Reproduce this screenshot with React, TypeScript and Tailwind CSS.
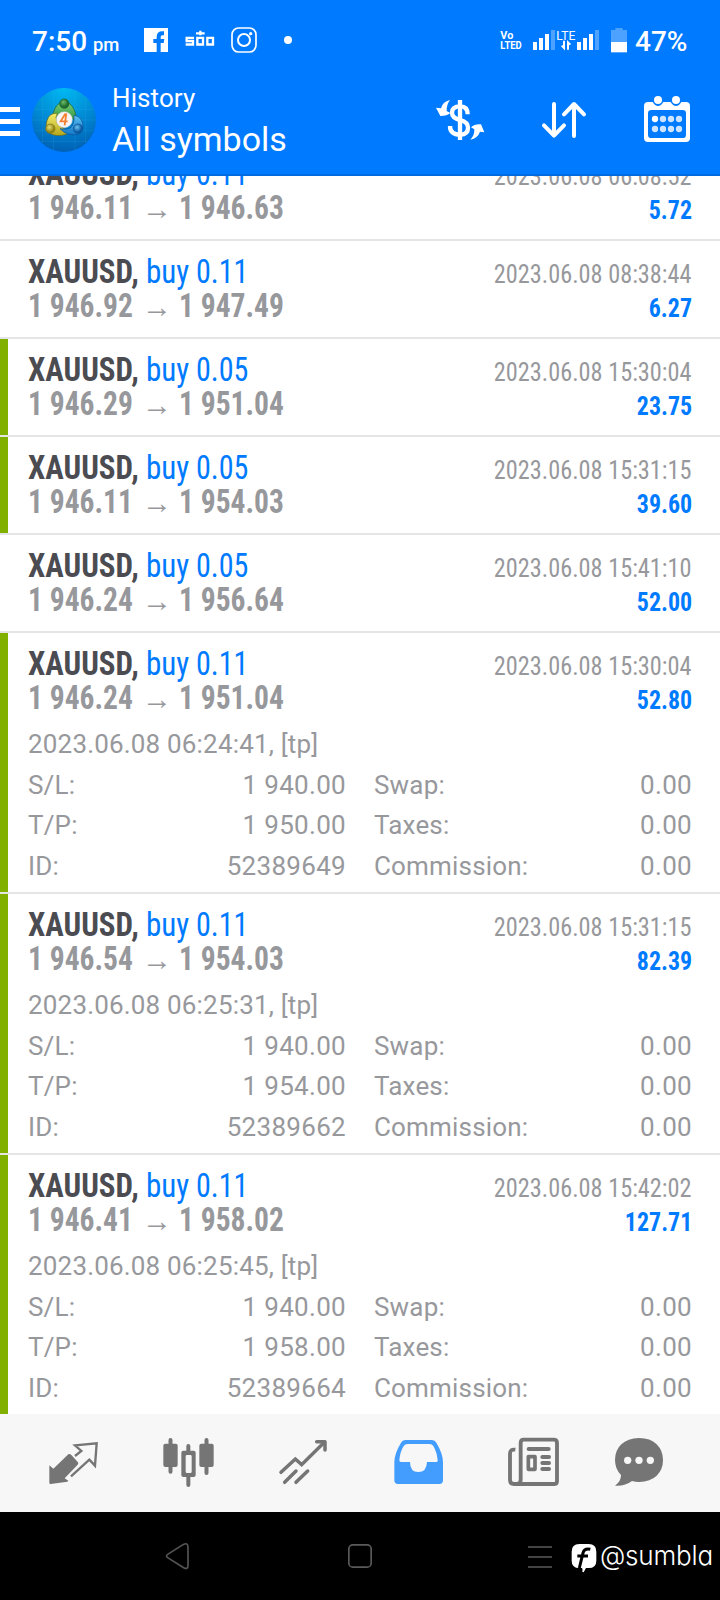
import React from "react";

type Trade = {
  volume: string;
  open: string;
  close: string;
  time: string;
  profit: string;
  tp?: boolean;
  details?: { opened: string; tp: string; id: string };
};

const trades: Trade[] = [
  { volume: "0.11", open: "1 946.11", close: "1 946.63", time: "2023.06.08 06:08:52", profit: "5.72" },
  { volume: "0.11", open: "1 946.92", close: "1 947.49", time: "2023.06.08 08:38:44", profit: "6.27" },
  { volume: "0.05", open: "1 946.29", close: "1 951.04", time: "2023.06.08 15:30:04", profit: "23.75", tp: true },
  { volume: "0.05", open: "1 946.11", close: "1 954.03", time: "2023.06.08 15:31:15", profit: "39.60", tp: true },
  { volume: "0.05", open: "1 946.24", close: "1 956.64", time: "2023.06.08 15:41:10", profit: "52.00" },
  {
    volume: "0.11", open: "1 946.24", close: "1 951.04", time: "2023.06.08 15:30:04", profit: "52.80", tp: true,
    details: { opened: "2023.06.08 06:24:41, [tp]", tp: "1 950.00", id: "52389649" },
  },
  {
    volume: "0.11", open: "1 946.54", close: "1 954.03", time: "2023.06.08 15:31:15", profit: "82.39", tp: true,
    details: { opened: "2023.06.08 06:25:31, [tp]", tp: "1 954.00", id: "52389662" },
  },
  {
    volume: "0.11", open: "1 946.41", close: "1 958.02", time: "2023.06.08 15:42:02", profit: "127.71", tp: true,
    details: { opened: "2023.06.08 06:25:45, [tp]", tp: "1 958.00", id: "52389664" },
  },
];

const condensed = "font-['Roboto_Condensed','Roboto',sans-serif] [font-stretch:75%]";

function SignalBars({ x }: { x: number }) {
  return (
    <>
      <rect x={x} y="126" width="12" height="24" />
      <rect x={x + 18} y="114" width="12" height="36" />
      <rect x={x + 36} y="102" width="12" height="48" />
      <rect x={x + 54} y="90" width="12" height="60" opacity=".3" />
    </>
  );
}

function StatusBar() {
  return (
    <div className="flex h-20 items-start text-white">
      <div className="flex w-[144px] items-baseline gap-[6px] pt-[22px] pl-8 font-medium leading-10">
        <span className="text-[28px]">7:50</span>
        <span className="origin-left scale-x-[0.97] text-[19px]">pm</span>
      </div>
      <svg className="h-20 w-[156px]" viewBox="432 0 468 240" fill="#fff">
        <rect x="432" y="84" width="72" height="72" />
        <path d="M470 156v-27h-10v-12h10v-6q0-17 17-17h5v12h-5q-5 0-5 5v6h11l-2 12h-9v27z" fill="#007aff" />
        <g fill="none" stroke="#fff" strokeWidth="7">
          <path d="M582 113.500h-22v9.500h19v10.500h-22M592 113.500h17v20h-17zM622 113.500h17v20h-17zM588 100h26M601 92v14" />
          <rect x="696" y="84" width="72" height="72" rx="20" strokeWidth="5" />
          <circle cx="732" cy="120" r="18" strokeWidth="6" />
        </g>
        <circle cx="752" cy="101" r="5" />
        <circle cx="864" cy="120" r="12" />
      </svg>
      <svg className="ml-[200px] h-20 w-[130px]" viewBox="420 0 390 240" fill="#fff">
        <g fontFamily="Roboto, sans-serif" fontWeight="700">
          <text x="421" y="118" fontSize="32" textLength="39" lengthAdjust="spacingAndGlyphs">Vo</text>
          <text x="421" y="147" fontSize="35" textLength="64" lengthAdjust="spacingAndGlyphs">LTED</text>
          <text x="589" y="120" fontSize="36" fontWeight="400" textLength="57" lengthAdjust="spacingAndGlyphs">LTE</text>
        </g>
        <SignalBars x={519} />
        <SignalBars x={651} />
        <path d="M612 122v22l-7-7M624 149v-22l7 7" fill="none" stroke="#fff" strokeWidth="6" />
        <path d="M753 90h13v-6h22v6h13v36h-48z" opacity=".3" />
        <rect x="753" y="126" width="48" height="31" />
      </svg>
      <span className="ml-[5px] pt-[22px] text-[28px] font-medium leading-10">47%</span>
    </div>
  );
}

function Logo() {
  return (
    <svg className="h-24 w-[80px]" viewBox="72 240 240 288">
      <defs>
        <radialGradient id="sky" cx=".5" cy="0" r="1">
          <stop offset="0" stopColor="#00baf2" />
          <stop offset=".55" stopColor="#0089d4" />
          <stop offset="1" stopColor="#0060b4" />
        </radialGradient>
        <linearGradient id="green" x2="0" y2="1"><stop stopColor="#7ccc76" /><stop offset="1" stopColor="#2a9440" /></linearGradient>
        <linearGradient id="gold" x2="0" y2="1"><stop stopColor="#f3ec6a" /><stop offset="1" stopColor="#b5a61c" /></linearGradient>
        <linearGradient id="blue" x2="0" y2="1"><stop stopColor="#5cc0f2" /><stop offset="1" stopColor="#1277c8" /></linearGradient>
        <radialGradient id="greenBall" cx=".4" cy=".35"><stop stopColor="#6dbb66" /><stop offset="1" stopColor="#1d6a2e" /></radialGradient>
        <radialGradient id="goldBall" cx=".4" cy=".35"><stop stopColor="#e9de74" /><stop offset="1" stopColor="#948716" /></radialGradient>
        <radialGradient id="blueBall" cx=".4" cy=".35"><stop stopColor="#6cc4f0" /><stop offset="1" stopColor="#0a5ca8" /></radialGradient>
      </defs>
      <circle cx="192" cy="360" r="96" fill="url(#sky)" />
      <path d="M160 270v181M225 270v181M257 290v140M128 290v140M105 328h174M97 360h190M105 392h174M121 424h142" stroke="#4fc3f0" strokeOpacity=".22" strokeWidth="2" />
      <g strokeWidth="2">
        <path d="M158 350q2-26 20-40 15-8 30 0 18 16 20 40l-2 14-20-18-26-4-19 16z" fill="url(#green)" stroke="#175f2b" />
        <path d="M172 340q-24-2-31 22-6 22 3 34 22 18 58 6l-6-12-24-20-4-18z" fill="url(#gold)" stroke="#6c6a13" />
        <path d="M222 346q20 2 26 24 4 26-14 33-30 8-54-17 30 6 38-11 6-14 4-29z" fill="url(#blue)" stroke="#0a4f92" />
        <circle cx="193" cy="311" r="14" fill="url(#greenBall)" stroke="#175f2b" />
        <circle cx="151" cy="386" r="14" fill="url(#goldBall)" stroke="#7a7415" />
        <circle cx="234" cy="386" r="14" fill="url(#blueBall)" stroke="#0a4f92" />
      </g>
      <circle cx="193" cy="359" r="24" fill="#f6f4f4" stroke="#c8c8c8" strokeWidth="1.5" />
      <path d="M196 341l-14 23h21M199 340l-5 36" fill="none" stroke="#f58233" strokeWidth="5.5" />
    </svg>
  );
}

function TitleBar() {
  return (
    <div className="flex h-24 items-start border-b-2 border-[#006be0] pr-7 text-white">
      <svg className="h-24 w-6" viewBox="0 240 72 288" fill="#fff">
        <path d="M0 321h60v15H0zM0 357h60v15H0zM0 393h60v15H0z" />
      </svg>
      <Logo />
      <div className="flex grow flex-col pl-2">
        <span className="pt-[2px] text-[26px] leading-[32px] tracking-[0.1px]">History</span>
        <span className="pt-[3px] text-[34px] leading-[44px]">All symbols</span>
      </div>
      <svg className="h-24 w-[50px]" viewBox="225 240 150 288" fill="none" stroke="#fff">
        <path d="M300 300v120" strokeWidth="13" />
        <path d="M323 343q0-24-22-24-25 0-25 19 0 16 25 22 23 6 23 23 0 20-23 21-31 0-31-26" strokeWidth="13" />
        <path d="M270 300q-23 6-27 25l-15-2 13 25q21 0 30-9l-11-6q-1-18 10-33zM331 419q22-4 29-24l13 2-10-24q-19-2-30 9l10 6q1 18-12 31z" fill="#fff" stroke="none" />
      </svg>
      <svg className="ml-[55px] h-24 w-12" viewBox="540 240 144 288" fill="none" stroke="#fff" strokeWidth="12" strokeLinecap="round" strokeLinejoin="round">
        <path d="M582 312v94M552 376l30 31 30-31M642 408v-94M612 343l30-31 30 31" />
      </svg>
      <svg className="ml-[54px] h-24 w-[50px]" viewBox="846 240 150 288" fill="#fff">
        <path fillRule="evenodd" d="M864 306h14q7 12 16 12t16-12h22q7 12 16 12t16-12h14q12 0 12 12v96q0 12-12 12H864q-12 0-12-12v-96q0-12 12-12zm10 24q-10 0-10 10v64q0 10 10 10h94q10 0 10-10v-64q0-10-10-10z" />
        <circle cx="894" cy="300" r="12" />
        <circle cx="948" cy="300" r="12" />
        <circle cx="885" cy="357" r="9.5" />
        <g opacity=".8">
          <circle cx="909" cy="357" r="9.5" />
          <circle cx="933" cy="357" r="9.5" />
          <circle cx="957" cy="357" r="9.5" />
          <circle cx="885" cy="387" r="9.5" />
          <circle cx="909" cy="387" r="9.5" />
          <circle cx="933" cy="387" r="9.5" />
          <circle cx="957" cy="387" r="9.5" />
        </g>
      </svg>
    </div>
  );
}

function DetailLine({ a, b, c, d }: { a: string; b: string; c: string; d: string }) {
  return (
    <div className="flex h-[40.67px]">
      <div className="flex w-[318px] justify-between">
        <span>{a}</span>
        <span className="tracking-[0.3px]">{b}</span>
      </div>
      <div className="ml-7 flex grow justify-between">
        <span>{c}</span>
        <span className="tracking-[0.3px]">{d}</span>
      </div>
    </div>
  );
}

function TradeRow({ trade }: { trade: Trade }) {
  const { details } = trade;
  return (
    <div className={`flex shrink-0 border-b-2 border-[#e5e5e5] ${details ? "h-[261px]" : "h-[98px]"}`}>
      <div className={`w-2 shrink-0 ${trade.tp ? "bg-[#82b000]" : ""}`} />
      <div className="flex grow flex-col pr-7 pl-5">
        <div className={`flex h-[82px] justify-between whitespace-nowrap ${condensed}`}>
          <div className="flex flex-col pt-[14px] text-[32.5px] leading-[34px]">
            <div className="flex h-[34px]">
              <span className="w-[118px] origin-left scale-x-[0.952] font-bold text-[#4b4b52]">XAUUSD,</span>
              <span className="w-[50px] origin-left scale-x-[0.955] text-[#007aff]">buy</span>
              <span className="origin-left scale-x-[0.925] text-[#007aff]">{trade.volume}</span>
            </div>
            <div className="flex h-[34px] font-bold text-[#97989c]">
              <span className="w-[114px] origin-left scale-x-[0.908]">{trade.open}</span>
              <span className="w-[37px] pt-px text-[30px] font-medium">→</span>
              <span className="origin-left scale-x-[0.908]">{trade.close}</span>
            </div>
          </div>
          <div className="flex flex-col items-end pt-4 text-[26px] leading-[34px]">
            <span className="origin-right scale-x-[0.935] text-[#97989c]">{trade.time}</span>
            <span className="origin-right scale-x-[0.92] font-bold text-[#007aff]">{trade.profit}</span>
          </div>
        </div>
        {details && (
          <div className="mt-[9px] text-[26px] leading-[40.67px] tracking-[0.18px] text-[#97989c]">
            <div>{details.opened}</div>
            <DetailLine a="S/L:" b="1 940.00" c="Swap:" d="0.00" />
            <DetailLine a="T/P:" b={details.tp} c="Taxes:" d="0.00" />
            <DetailLine a="ID:" b={details.id} c="Commission:" d="0.00" />
          </div>
        )}
      </div>
    </div>
  );
}

function TabBar() {
  const size = "h-[98px] w-[115px]";
  return (
    <div className="flex h-[98px] shrink-0 bg-[#f7f7f7] pl-4">
      <svg className={size} viewBox="48 12 345 294" fill="#757575">
        <path d="M148 166l12 10 45-43q5-2 9 2l20 22q2 4-1 7l-39 41 11 7-3 3-50 7q-5 1-4-5z" />
        <path d="M225 138l19-15-19-17 65-6-5 67-17-18-55 50" fill="none" stroke="#757575" strokeWidth="7" />
      </svg>
      <svg className={size} viewBox="393 12 345 294" fill="#757575">
        <rect x="490" y="101" width="43" height="70" rx="6" />
        <rect x="598" y="101" width="43" height="70" rx="6" />
        <path d="M511.500 90v95M619.500 90v99M565 108v15M565 200v25" stroke="#757575" strokeWidth="12" strokeLinecap="round" />
        <path fillRule="evenodd" d="M550 122h31q6 0 6 6v67q0 6-6 6h-31q-6 0-6-6v-67q0-6 6-6zm11 13q-4 0-4 4v46q0 4 4 4h10q4 0 4-4v-46q0-4-4-4z" />
      </svg>
      <svg className={size} viewBox="738 12 345 294" fill="none" stroke="#757575" strokeWidth="10.5" strokeLinecap="round">
        <path d="M843 187l43-40 19 17 68-67M854 217l34-34M888 217l35-34" />
        <path d="M950 95h25v25" strokeLinejoin="round" />
      </svg>
      <svg className={size} viewBox="3 12 345 294" fill="#439dff">
        <path fillRule="evenodd" d="M136 90h80q9 0 13 8 20 33 20 59v54q0 11-11 11H114q-11 0-11-11v-54q0-26 20-59 4-8 13-8zm7 12q-8 0-12 6-11 18-13 43 0 5 5 5h27q0 30 25 30t26-30h28q5 0 4-5-2-24-13-43-4-6-11-6z" />
      </svg>
      <svg className={size} viewBox="348 12 345 294" fill="none" stroke="#757575">
        <path d="M466 119q-16-2-16 12v79q0 12 12 12h122q7 0 7-9V99q0-10-10-10h-90q-9 0-9 10v111q0 11-11 12" strokeWidth="11.5" />
        <path d="M506 117h60M547 141h20M547 159h20M547 177h20" strokeWidth="12" strokeLinecap="round" />
        <rect x="505" y="140" width="20" height="38" strokeWidth="11" strokeLinejoin="round" />
      </svg>
      <svg className="h-[98px] w-[113px]" viewBox="693 12 339 294" fill="#757575">
        <path d="M837 84q34 0 53 19t19 47q0 29-19 47t-53 19q-11 0-21-3-21 16-51 14 18-12 18-32-18-18-18-45 0-29 19-47t53-19z" />
        <g fill="#f7f7f7">
          <circle cx="803" cy="151" r="11" />
          <circle cx="837" cy="151" r="11" />
          <circle cx="871" cy="151" r="11" />
        </g>
      </svg>
    </div>
  );
}

function SystemBar() {
  return (
    <div className="flex h-[88px] shrink-0 items-start bg-black text-white">
      <svg className="ml-[160px] h-[88px] w-[36px]" viewBox="480 306 108 264" fill="none" stroke="#555" strokeWidth="5">
        <path d="M503 433l46-29q15-8 15 8v54q0 14-13 7l-48-30q-7-5 0-10z" />
      </svg>
      <svg className="ml-[144px] h-[88px] w-[40px]" viewBox="1020 306 120 264" fill="none" stroke="#5a5a5a" strokeWidth="5">
        <rect x="1046.500" y="404.500" width="67" height="67" rx="12" />
      </svg>
      <svg className="ml-[140px] h-[88px] w-[40px]" viewBox="480 306 120 264" stroke="#5a5a5a" strokeWidth="5">
        <path d="M504 411h72M504 441h72M504 471h72" />
      </svg>
      <svg className="h-[88px] w-[40px]" viewBox="600 306 120 264">
        <path d="M658 402h28q23 0 23 23v27q0 22-23 22h-8l-7 12-5-12h-8q-23 0-23-22v-27q0-23 23-23z" fill="#fff" />
        <path d="M691 418q-18-4-22 11l-11 45M652 438h32" fill="none" stroke="#000" strokeWidth="9" />
        <path d="M669 486l8-33" stroke="#fff" strokeWidth="5" />
      </svg>
      <span className="origin-left scale-x-[0.965] pt-[24px] font-['Inter',sans-serif] text-[27px] leading-10 font-[350] tracking-[-0.2px] [font-feature-settings:'cv11']">@sumbla</span>
    </div>
  );
}

export default function App() {
  return (
    <div className="flex h-[1600px] w-[720px] flex-col overflow-hidden bg-white font-['Roboto',sans-serif]">
      <header className="shrink-0 bg-[#007aff]">
        <StatusBar />
        <TitleBar />
      </header>
      <main className="flex h-[1238px] shrink-0 flex-col justify-start overflow-hidden">
        <div className="-mt-[33px] flex flex-col">
          {trades.map((trade, i) => (
            <TradeRow key={i} trade={trade} />
          ))}
        </div>
      </main>
      <TabBar />
      <SystemBar />
    </div>
  );
}
